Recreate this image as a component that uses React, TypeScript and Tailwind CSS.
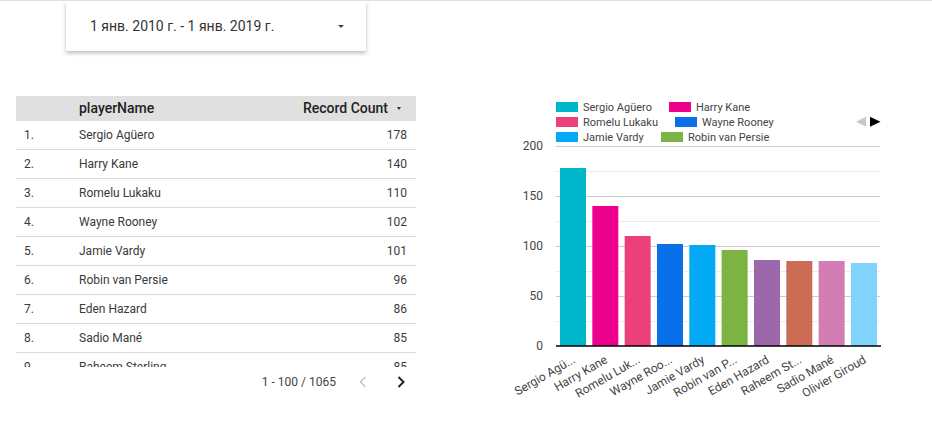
const rows = [
  { name: "Sergio Agüero", count: 178 },
  { name: "Harry Kane", count: 140 },
  { name: "Romelu Lukaku", count: 110 },
  { name: "Wayne Rooney", count: 102 },
  { name: "Jamie Vardy", count: 101 },
  { name: "Robin van Persie", count: 96 },
  { name: "Eden Hazard", count: 86 },
  { name: "Sadio Mané", count: 85 },
  { name: "Raheem Sterling", count: 85 },
];

const bars = [
  { label: "Sergio Agü...", value: 178, color: "#00b6cb" },
  { label: "Harry Kane", value: 140, color: "#ec008c" },
  { label: "Romelu Luk...", value: 110, color: "#ec407a" },
  { label: "Wayne Roo...", value: 102, color: "#0a70ea" },
  { label: "Jamie Vardy", value: 101, color: "#03a9f4" },
  { label: "Robin van P...", value: 96, color: "#7cb342" },
  { label: "Eden Hazard", value: 86, color: "#9c67ab" },
  { label: "Raheem St...", value: 85, color: "#cd6c55" },
  { label: "Sadio Mané", value: 85, color: "#d47cb4" },
  { label: "Olivier Giroud", value: 83, color: "#80d4fb" },
];

const legend = [
  { sx: 66, label: "Sergio Agüero", color: "#00b6cb", row: 0 },
  { sx: 179, label: "Harry Kane", color: "#ec008c", row: 0 },
  { sx: 66, label: "Romelu Lukaku", color: "#ec407a", row: 1 },
  { sx: 185, label: "Wayne Rooney", color: "#0a70ea", row: 1 },
  { sx: 66, label: "Jamie Vardy", color: "#03a9f4", row: 2 },
  { sx: 171, label: "Robin van Persie", color: "#7cb342", row: 2 },
];

function BarChart() {
  const axisY = 250;
  return (
    <svg width="442" height="327" className="block" style={{ fontFamily: "Roboto, sans-serif" }}>
      {/* legend */}
      {legend.map((l) => (
        <g key={l.label}>
          <rect x={l.sx} y={6 + l.row * 15} width="22" height="10" fill={l.color} />
          <text x={l.sx + 27} y={15 + l.row * 15} fontSize="11" fill="#444">
            {l.label}
          </text>
        </g>
      ))}
      <polygon points="366,25.7 376,20.7 376,30.7" fill="#c8c8c8" />
      <polygon points="380,20.7 390.5,25.7 380,30.7" fill="#000" />

      {/* grid */}
      {[25, 50, 75, 100, 125, 150, 175, 200].map((v) => (
        <line
          key={v}
          x1="66"
          x2="390"
          y1={axisY - v + 0.5}
          y2={axisY - v + 0.5}
          stroke={v % 50 === 0 ? "#cccccc" : "#ebebeb"}
          strokeWidth="1"
        />
      ))}
      {[0, 50, 100, 150, 200].map((v) => (
        <text key={v} x="53" y={axisY - v + 4} fontSize="12" fill="#444" textAnchor="end">
          {v}
        </text>
      ))}

      {/* bars */}
      {bars.map((b, i) => {
        const x = 70 + i * 32.33;
        const lx = x + 16;
        const ly = axisY + 16;
        return (
          <g key={b.label}>
            <rect x={x} y={axisY - b.value} width="26" height={b.value} fill={b.color} />
            <text
              x={lx}
              y={ly}
              fontSize="12"
              fill="#444"
              textAnchor="end"
              transform={`rotate(-30 ${lx} ${ly})`}
            >
              {b.label}
            </text>
          </g>
        );
      })}
      <line x1="66" x2="391" y1={axisY} y2={axisY} stroke="#000" strokeWidth="1.5" />
    </svg>
  );
}

export default function App() {
  return (
    <div className="w-[932px] h-[423px] overflow-hidden bg-white border-t border-[#e0e0e0] font-['Roboto',sans-serif]">
      {/* date range picker */}
      <div className="ml-[66px] w-[300px] h-[50px] bg-white shadow-[0_2px_4px_rgba(0,0,0,0.28)] flex items-center pl-[24px] pr-[22px]">
        <span className="text-[14px] text-[#333]">1 янв. 2010 г. - 1 янв. 2019 г.</span>
        <span className="ml-auto w-0 h-0 border-l-[3px] border-r-[3px] border-t-[3px] border-l-transparent border-r-transparent border-t-[#444]" />
      </div>

      <div className="flex mt-[45px]">
        {/* table */}
        <div className="ml-[16px] w-[400px]">
          <div className="h-[25px] bg-[#e0e0e0] flex items-center text-[14px] font-medium text-[#222]">
            <span className="w-[63px]" />
            <span>playerName</span>
            <span className="ml-auto">Record Count</span>
            <span className="ml-[9px] mr-[15px] w-0 h-0 border-l-[2.5px] border-r-[2.5px] border-t-[3px] border-l-transparent border-r-transparent border-t-[#333]" />
          </div>
          <div className="h-[246px] overflow-hidden">
            {rows.map((r, i) => (
              <div
                key={r.name}
                className="h-[29px] flex items-center border-b border-[#d9d9d9] text-[12px] text-[#3a3a3a]"
              >
                <span className="w-[63px] pl-[8px]">{i + 1}.</span>
                <span>{r.name}</span>
                <span className="ml-auto pr-[9px]">{r.count}</span>
              </div>
            ))}
          </div>
          <div className="h-[30px] flex items-center justify-end text-[12px] text-[#444]">
            <span>1 - 100 / 1065</span>
            <svg width="8" height="12" viewBox="0 0 8 12" className="ml-[23px]">
              <path d="M6.5 1 L1.5 6 L6.5 11" fill="none" stroke="#bdbdbd" strokeWidth="1.3" />
            </svg>
            <svg width="8" height="12" viewBox="0 0 8 12" className="ml-[30px] mr-[11px]">
              <path d="M1.5 1 L6.5 6 L1.5 11" fill="none" stroke="#222" strokeWidth="2" />
            </svg>
          </div>
        </div>

        {/* chart */}
        <div className="ml-[74px]">
          <BarChart />
        </div>
      </div>
    </div>
  );
}
